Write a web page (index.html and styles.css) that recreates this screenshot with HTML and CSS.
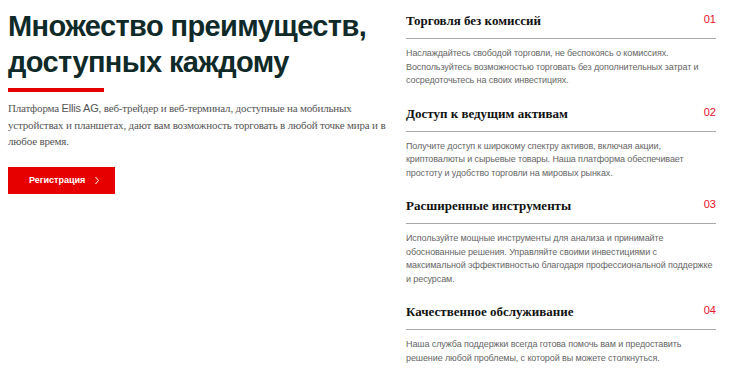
FILE: index.html
```html
<!DOCTYPE html>
<html>
<head>
	<meta charset="utf-8">
	<title>Множество преимуществ</title>
	<link rel="stylesheet" href="styles.css">
</head>
<body>
<div class="wrap">
	<div class="intro">
		<h1>Множество преимуществ, доступных каждому</h1>
		<div class="bar"></div>
		<p class="lead">Платформа <span class="brand">Ellis AG</span>, веб-трейдер и веб-терминал, доступные на мобильных устройствах и планшетах, дают вам возможность торговать в любой точке мира и в любое время.</p>
		<a class="btn" href="#">Регистрация
			<svg width="6" height="9" viewBox="0 0 6 9"><path d="M1.5 1 L4.5 4.5 L1.5 8" fill="none" stroke="#fff" stroke-width="1"/></svg>
		</a>
	</div>
	<div class="features">
		<div class="item">
			<div class="head"><h3>Торговля без комиссий</h3><span class="num">01</span></div>
			<p>Наслаждайтесь свободой торговли, не беспокоясь о комиссиях. Воспользуйтесь возможностью торговать без дополнительных затрат и сосредоточьтесь на своих инвестициях.</p>
		</div>
		<div class="item">
			<div class="head"><h3>Доступ к ведущим активам</h3><span class="num">02</span></div>
			<p>Получите доступ к широкому спектру активов, включая акции, криптовалюты и сырьевые товары. Наша платформа обеспечивает простоту и удобство торговли на мировых рынках.</p>
		</div>
		<div class="item">
			<div class="head"><h3>Расширенные инструменты</h3><span class="num">03</span></div>
			<p>Используйте мощные инструменты для анализа и принимайте обоснованные решения. Управляйте своими инвестициями с максимальной эффективностью благодаря профессиональной поддержке и ресурсам.</p>
		</div>
		<div class="item">
			<div class="head"><h3>Качественное обслуживание</h3><span class="num">04</span></div>
			<p>Наша служба поддержки всегда готова помочь вам и предоставить решение любой проблемы, с которой вы можете столкнуться.</p>
		</div>
	</div>
</div>
</body>
</html>
```

FILE: styles.css
```css
body,div,h1,h3,p{margin:0;padding:0;}
body{background:#fff;font:12px/1.4 "Liberation Sans",Arial,sans-serif;}
.wrap{display:flex;padding:8px 23px 0 8px;}
.intro{width:386px;flex:none;}
.intro h1{font:bold 29px/36px "Liberation Sans",Arial,sans-serif;color:#0f2a28;letter-spacing:-0.6px;width:378px;}
.intro .bar{width:96px;height:4px;background:#e60000;margin-top:8px;}
.intro .lead{font:11px/16.5px "Liberation Serif","Times New Roman",serif;color:#555;margin-top:8px;letter-spacing:-0.18px;}
.intro .lead .brand{font-family:"Liberation Sans",Arial,sans-serif;}
.btn{display:flex;align-items:center;gap:9px;width:86px;height:27px;padding-left:21px;margin-top:17px;background:#e60000;color:#fff;font:bold 9px "Liberation Sans",Arial,sans-serif;text-decoration:none;}
.features{width:310px;margin-left:12px;padding-top:4px;}
.item{margin-bottom:17px;}
.item .head{display:flex;justify-content:space-between;align-items:flex-start;padding-bottom:8px;border-bottom:1px solid #a8a8a8;}
.item h3{font:bold 13px/18px "Liberation Serif","Times New Roman",serif;color:#111;}
.item .num{font:11px/14px "Liberation Sans",Arial,sans-serif;color:#e8102a;}
.item p{font:9px/13.5px "Liberation Sans",Arial,sans-serif;color:#666;margin-top:8px;letter-spacing:-0.1px;}
```
